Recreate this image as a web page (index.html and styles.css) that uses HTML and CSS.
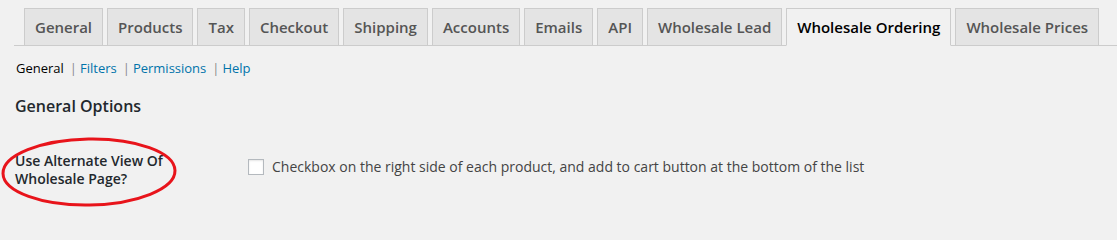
FILE: index.html
```html
<!DOCTYPE html>
<html>
<head>
<meta charset="utf-8">
<link rel="stylesheet" href="styles.css">
</head>
<body>
<div class="wrap">
  <nav class="tabs">
    <a class="tab">General</a>
    <a class="tab">Products</a>
    <a class="tab">Tax</a>
    <a class="tab">Checkout</a>
    <a class="tab">Shipping</a>
    <a class="tab">Accounts</a>
    <a class="tab">Emails</a>
    <a class="tab">API</a>
    <a class="tab">Wholesale Lead</a>
    <a class="tab tab-active">Wholesale Ordering</a>
    <a class="tab">Wholesale Prices</a>
  </nav>
  <ul class="subsub">
    <li class="current">General</li>
    <li class="sep">|</li>
    <li class="link">Filters</li>
    <li class="sep">|</li>
    <li class="link">Permissions</li>
    <li class="sep">|</li>
    <li class="link">Help</li>
  </ul>
  <h2 class="section-title">General Options</h2>
  <div class="row">
    <div class="label">Use Alternate View Of<br>Wholesale Page?</div>
    <div class="field">
      <span class="checkbox"></span>
      <span class="desc">Checkbox on the right side of each product, and add to cart button at the bottom of the list</span>
    </div>
    <svg class="circle" width="180" height="74" viewBox="0 0 180 74">
      <ellipse cx="89" cy="37" rx="86" ry="33" fill="none" stroke="#e8141b" stroke-width="3" transform="rotate(-1 89 37)"/>
    </svg>
  </div>
</div>
</body>
</html>
```

FILE: styles.css
```css
html, body {
  margin: 0;
  padding: 0;
  background: #f1f1f1;
  font-family: "Open Sans", "Liberation Sans", sans-serif;
}

.wrap {
  padding-left: 14px;
}

.tabs {
  display: flex;
  gap: 4px;
  padding: 8px 0 0 10px;
  border-bottom: 1px solid #cccccc;
}

.tab {
  display: block;
  padding: 6px 10px;
  line-height: 24px;
  font-size: 15px;
  font-weight: 600;
  color: #555555;
  background: #e4e4e4;
  border: 1px solid #cccccc;
  border-bottom: none;
  white-space: nowrap;
}

.tab-active {
  background: #f1f1f1;
  color: #000000;
  border-bottom: 1px solid #f1f1f1;
  margin-bottom: -1px;
}

.subsub {
  display: flex;
  list-style: none;
  margin: 12px 0 0 2px;
  padding: 0;
  font-size: 13px;
  line-height: 20px;
  gap: 3px;
}

.subsub .current {
  color: #000000;
}

.subsub .sep {
  color: #8a8a8a;
  margin-left: 3px;
}

.subsub .link {
  color: #0073aa;
}

.section-title {
  margin: 16px 0 0 1px;
  font-size: 16px;
  line-height: 24px;
  font-weight: 600;
  color: #23282d;
}

.row {
  position: relative;
  display: flex;
  align-items: flex-start;
  margin-top: 34px;
  padding-bottom: 30px;
}

.label {
  width: 233px;
  padding-left: 1px;
  font-size: 14px;
  line-height: 18px;
  font-weight: 600;
  color: #23282d;
}

.field {
  display: flex;
  align-items: center;
  gap: 8px;
  padding-top: 5px;
}

.checkbox {
  display: block;
  width: 14px;
  height: 14px;
  border: 1px solid #b4b9be;
  background: #ffffff;
  box-shadow: inset 0 1px 2px rgba(0,0,0,0.1);
}

.desc {
  font-size: 14px;
  line-height: 20px;
  color: #444444;
}

.circle {
  position: absolute;
  left: -14px;
  top: -17px;
  overflow: visible;
}
```
